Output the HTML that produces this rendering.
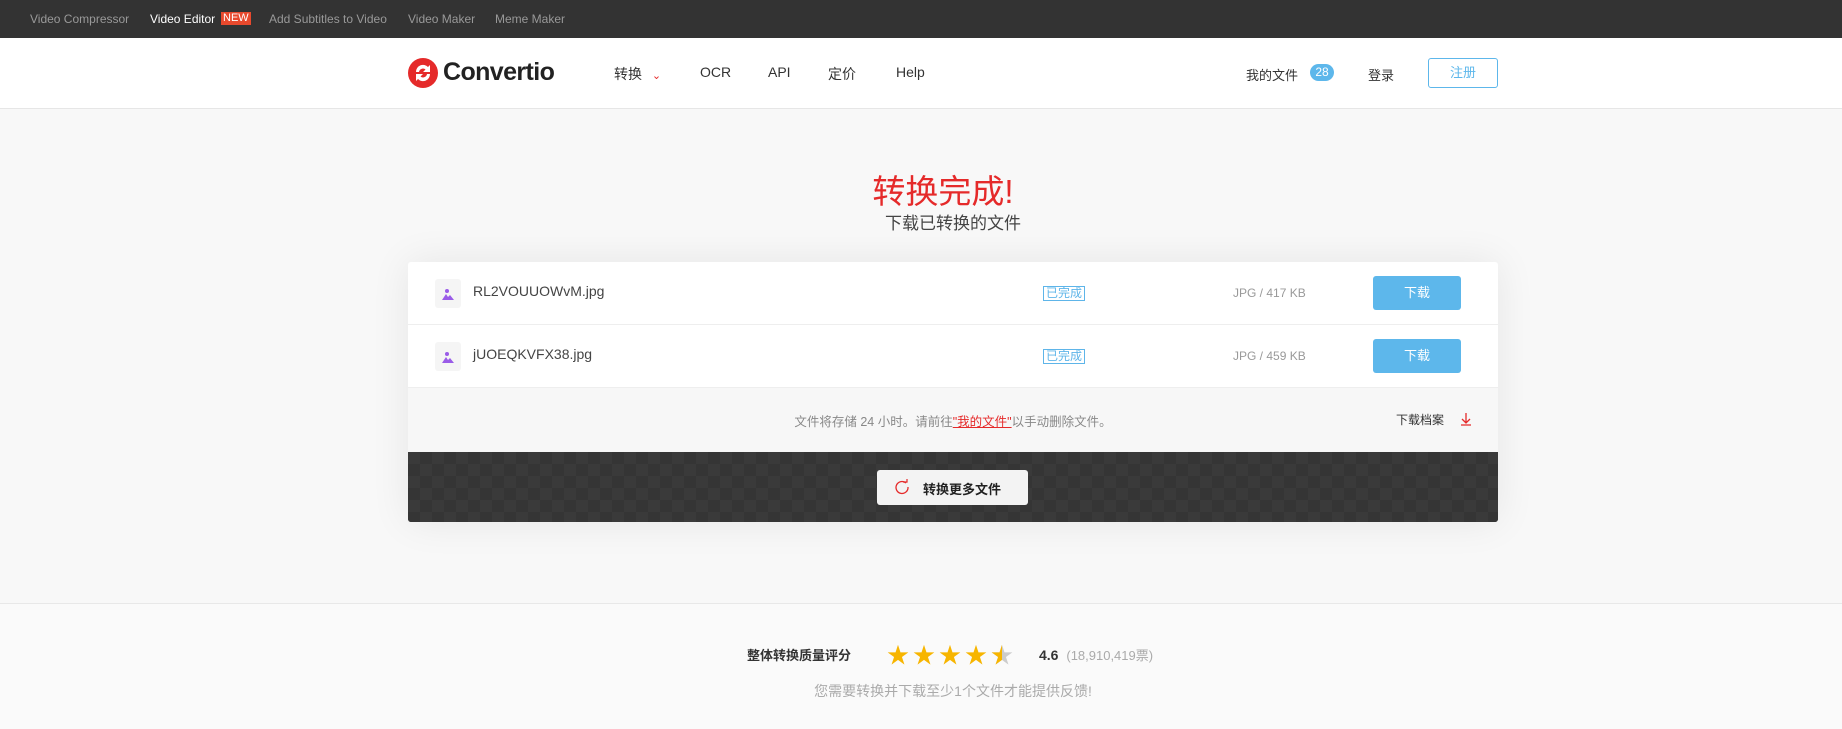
<!DOCTYPE html>
<html><head><meta charset="utf-8"><style>
*{margin:0;padding:0;box-sizing:border-box}
body{width:1842px;height:729px;overflow:hidden;background:#f8f8f8;font-family:"Liberation Sans","Noto Sans CJK SC",sans-serif;position:relative;color:#333}
.abs{position:absolute;white-space:nowrap}
.top{position:absolute;left:0;top:0;width:1842px;height:38px;background:#333}
.top span{position:absolute;top:12px;font-size:12px;color:#999}
.hdr{position:absolute;left:0;top:38px;width:1842px;height:71px;background:#fff;border-bottom:1px solid #e6e6e6}
.nav{font-size:14px;color:#333;top:64px}
.card{position:absolute;left:408px;top:262px;width:1090px;height:260px;box-shadow:0 0 40px rgba(0,0,0,.08);border-radius:3px;overflow:hidden}
.row{position:absolute;left:0;width:1090px;height:63px;background:#fff;border-bottom:1px solid #eee}
.fi{position:absolute;left:27px;top:17px;width:26px;height:29px;background:#f5f5f5;border-radius:3px}
.fn{position:absolute;left:65px;top:21px;font-size:14px;color:#444}
.bd{position:absolute;left:635px;top:24px;font-size:12px;color:#5eb5e9;border:1px solid #5eb5e9;padding:0 2px;line-height:13px}
.sz{position:absolute;left:825px;top:24px;font-size:12px;color:#999}
.dl{position:absolute;left:965px;top:14px;width:88px;height:34px;background:#5db7eb;border-radius:3px;color:#fff;font-size:13px;text-align:center;line-height:34px}
.dark{position:absolute;left:0;top:190px;width:1090px;height:70px;background:#3a3a3a;background-image:linear-gradient(45deg,#353535 25%,transparent 25%,transparent 75%,#353535 75%),linear-gradient(45deg,#353535 25%,transparent 25%,transparent 75%,#353535 75%);background-size:24px 24px;background-position:0 0,12px 12px}
.star{position:absolute;top:638px;font-size:22px;color:#f7b500}
</style></head><body>
<div class="top">
<span style="left:30px">Video Compressor</span>
<span style="left:150px;color:#fff">Video Editor</span>
<span style="left:221px;top:12px;background:#e8492d;color:#fff;font-size:11px;padding:0 2px;line-height:13px">NEW</span>
<span style="left:269px">Add Subtitles to Video</span>
<span style="left:408px">Video Maker</span>
<span style="left:495px">Meme Maker</span>
</div>
<div class="hdr"></div>
<svg class="abs" style="left:408px;top:58px" width="30" height="30" viewBox="0 0 30 30"><circle cx="15" cy="15" r="15" fill="#e52a2a"/><path d="M8 14a7 7 0 0 1 12-5l2-2v7h-7l2.5-2.5A4 4 0 0 0 11 14z M22 16a7 7 0 0 1-12 5l-2 2v-7h7l-2.5 2.5A4 4 0 0 0 19 16z" fill="#fff"/></svg>
<div class="abs" style="left:443px;top:58px;font-size:25px;font-weight:bold;color:#222;letter-spacing:-0.6px">Convertio</div>
<div class="abs nav" style="left:614px">转换 <span style="color:#e52a2a;font-size:11px;margin-left:6px">&#8964;</span></div>
<div class="abs nav" style="left:700px">OCR</div>
<div class="abs nav" style="left:768px">API</div>
<div class="abs nav" style="left:828px">定价</div>
<div class="abs nav" style="left:896px">Help</div>
<div class="abs nav" style="left:1246px;font-size:13px;top:65px">我的文件</div>
<div class="abs" style="left:1310px;top:64px;width:24px;height:17px;border-radius:9px;background:#5db7eb;color:#fff;font-size:12px;text-align:center;line-height:17px">28</div>
<div class="abs nav" style="left:1368px;font-size:13px;top:65px">登录</div>
<div class="abs" style="left:1428px;top:58px;width:70px;height:30px;border:1px solid #5db7eb;border-radius:3px;color:#5db7eb;font-size:13px;text-align:center;line-height:28px">注册</div>
<div class="abs" style="left:398px;width:1090px;top:165px;text-align:center;font-size:33px;color:#e52a2a">转换完成!</div>
<div class="abs" style="left:408px;width:1090px;top:209px;text-align:center;font-size:17px;color:#444">下载已转换的文件</div>
<div class="card">
<div class="row" style="top:0"><div class="fi"><svg width="26" height="29"><circle cx="12" cy="12" r="2" fill="#9a5ce8"/><path d="M7 21l4-6 2 3 2-2 4 5z" fill="#9a5ce8"/></svg></div><div class="fn">RL2VOUUOWvM.jpg</div><div class="bd">已完成</div><div class="sz">JPG / 417 KB</div><div class="dl">下载</div></div>
<div class="row" style="top:63px"><div class="fi"><svg width="26" height="29"><circle cx="12" cy="12" r="2" fill="#9a5ce8"/><path d="M7 21l4-6 2 3 2-2 4 5z" fill="#9a5ce8"/></svg></div><div class="fn">jUOEQKVFX38.jpg</div><div class="bd">已完成</div><div class="sz">JPG / 459 KB</div><div class="dl">下载</div></div>
<div style="position:absolute;left:0;top:126px;width:1090px;height:64px;background:#f7f7f7"></div>
<div class="abs" style="left:0;width:1090px;text-align:center;top:149px;font-size:12.5px;color:#888">文件将存储 24 小时。请前往<span style="color:#e52a2a;text-decoration:underline">"我的文件"</span>以手动删除文件。</div>
<div class="abs" style="left:988px;top:149px;font-size:12px;color:#333">下载档案</div>
<svg class="abs" style="left:1052px;top:150px" width="12" height="14"><path d="M6 1v10M2 7l4 4 4-4M1 13h10" stroke="#e52a2a" fill="none" stroke-width="1.3"/></svg>
<div class="dark"></div>
<div class="abs" style="left:469px;top:208px;width:151px;height:35px;background:#f3f3f3;border-radius:3px"></div>
<svg class="abs" style="left:486px;top:217px" width="16" height="16"><path d="M12 4A6 6 0 1 0 14 8" stroke="#e52a2a" fill="none" stroke-width="1.3"/><path d="M9 3h4V0" stroke="#e52a2a" fill="none" stroke-width="1.2"/></svg>
<div class="abs" style="left:515px;top:217px;font-size:13px;font-weight:bold;color:#222">转换更多文件</div>
</div>
<div class="abs" style="left:0;top:603px;width:1842px;height:126px;background:#fafafa;border-top:1px solid #e8e8e8"></div>
<div class="abs" style="left:747px;top:645px;font-size:13px;font-weight:bold;color:#333">整体转换质量评分</div>
<div class="star" style="left:887px">★</div><div class="star" style="left:913px">★</div><div class="star" style="left:939px">★</div><div class="star" style="left:965px">★</div>
<div class="star" style="left:991px;color:#ccc">★</div><div class="star" style="left:991px;width:11px;overflow:hidden">★</div>
<div class="abs" style="left:1039px;top:645px;font-size:14px;font-weight:bold;color:#333">4.6 <span style="font-weight:normal;color:#aaa;font-size:13px;margin-left:4px">(18,910,419票)</span></div>
<div class="abs" style="left:408px;width:1090px;text-align:center;top:681px;font-size:14px;color:#aaa">您需要转换并下载至少1个文件才能提供反馈!</div>
</body></html>
